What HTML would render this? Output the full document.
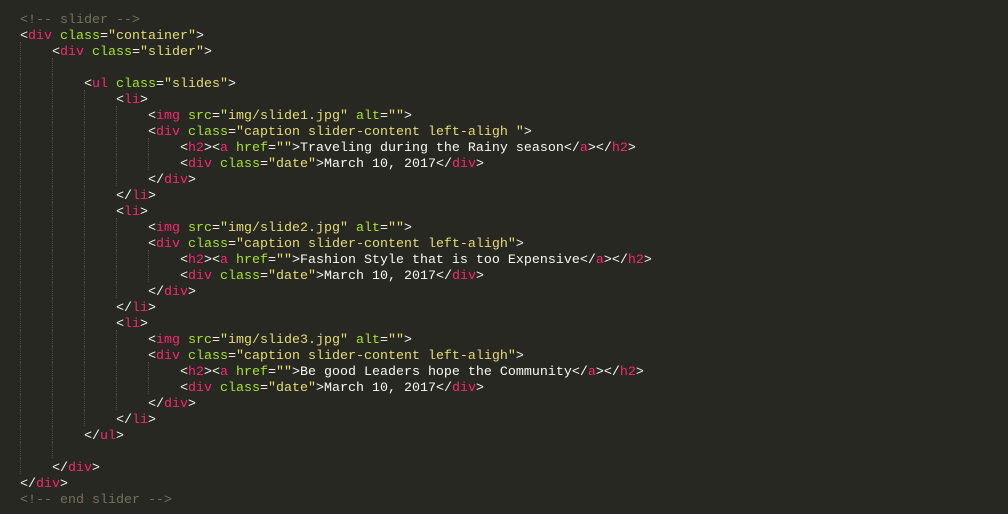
<!DOCTYPE html>
<html><head><meta charset="utf-8"><style>
html,body{margin:0;padding:0;background:#272822;width:1008px;height:514px;overflow:hidden}
#c{position:absolute;left:20px;top:13px;font-family:"Liberation Mono",monospace;font-size:13.333px;color:#f8f8f2}
.l{height:16px;line-height:16px;white-space:pre;position:relative}
.g{position:absolute;top:-3px;height:16px;border-left:1px dotted #4a4b44}
.t{color:#f92672}.a{color:#a6e22e}.s{color:#e6db74}.m{color:#75715e}
</style></head><body><div id="c">
<div class="l"><span class="m">&lt;!-- slider --&gt;</span></div>
<div class="l">&lt;<span class="t">div</span> <span class="a">class</span>=<span class="s">"container"</span>&gt;</div>
<div class="l"><i class="g" style="left:0"></i>    &lt;<span class="t">div</span> <span class="a">class</span>=<span class="s">"slider"</span>&gt;</div>
<div class="l"><i class="g" style="left:0"></i><i class="g" style="left:32px"></i> </div>
<div class="l"><i class="g" style="left:0"></i><i class="g" style="left:32px"></i>        &lt;<span class="t">ul</span> <span class="a">class</span>=<span class="s">"slides"</span>&gt;</div>
<div class="l"><i class="g" style="left:0"></i><i class="g" style="left:32px"></i><i class="g" style="left:64px"></i>            &lt;<span class="t">li</span>&gt;</div>
<div class="l"><i class="g" style="left:0"></i><i class="g" style="left:32px"></i><i class="g" style="left:64px"></i><i class="g" style="left:96px"></i>                &lt;<span class="t">img</span> <span class="a">src</span>=<span class="s">"img/slide1.jpg"</span> <span class="a">alt</span>=<span class="s">""</span>&gt;</div>
<div class="l"><i class="g" style="left:0"></i><i class="g" style="left:32px"></i><i class="g" style="left:64px"></i><i class="g" style="left:96px"></i>                &lt;<span class="t">div</span> <span class="a">class</span>=<span class="s">"caption slider-content left-aligh "</span>&gt;</div>
<div class="l"><i class="g" style="left:0"></i><i class="g" style="left:32px"></i><i class="g" style="left:64px"></i><i class="g" style="left:96px"></i><i class="g" style="left:128px"></i>                    &lt;<span class="t">h2</span>&gt;&lt;<span class="t">a</span> <span class="a">href</span>=<span class="s">""</span>&gt;Traveling during the Rainy season&lt;/<span class="t">a</span>&gt;&lt;/<span class="t">h2</span>&gt;</div>
<div class="l"><i class="g" style="left:0"></i><i class="g" style="left:32px"></i><i class="g" style="left:64px"></i><i class="g" style="left:96px"></i><i class="g" style="left:128px"></i>                    &lt;<span class="t">div</span> <span class="a">class</span>=<span class="s">"date"</span>&gt;March 10, 2017&lt;/<span class="t">div</span>&gt;</div>
<div class="l"><i class="g" style="left:0"></i><i class="g" style="left:32px"></i><i class="g" style="left:64px"></i><i class="g" style="left:96px"></i>                &lt;/<span class="t">div</span>&gt;</div>
<div class="l"><i class="g" style="left:0"></i><i class="g" style="left:32px"></i><i class="g" style="left:64px"></i>            &lt;/<span class="t">li</span>&gt;</div>
<div class="l"><i class="g" style="left:0"></i><i class="g" style="left:32px"></i><i class="g" style="left:64px"></i>            &lt;<span class="t">li</span>&gt;</div>
<div class="l"><i class="g" style="left:0"></i><i class="g" style="left:32px"></i><i class="g" style="left:64px"></i><i class="g" style="left:96px"></i>                &lt;<span class="t">img</span> <span class="a">src</span>=<span class="s">"img/slide2.jpg"</span> <span class="a">alt</span>=<span class="s">""</span>&gt;</div>
<div class="l"><i class="g" style="left:0"></i><i class="g" style="left:32px"></i><i class="g" style="left:64px"></i><i class="g" style="left:96px"></i>                &lt;<span class="t">div</span> <span class="a">class</span>=<span class="s">"caption slider-content left-aligh"</span>&gt;</div>
<div class="l"><i class="g" style="left:0"></i><i class="g" style="left:32px"></i><i class="g" style="left:64px"></i><i class="g" style="left:96px"></i><i class="g" style="left:128px"></i>                    &lt;<span class="t">h2</span>&gt;&lt;<span class="t">a</span> <span class="a">href</span>=<span class="s">""</span>&gt;Fashion Style that is too Expensive&lt;/<span class="t">a</span>&gt;&lt;/<span class="t">h2</span>&gt;</div>
<div class="l"><i class="g" style="left:0"></i><i class="g" style="left:32px"></i><i class="g" style="left:64px"></i><i class="g" style="left:96px"></i><i class="g" style="left:128px"></i>                    &lt;<span class="t">div</span> <span class="a">class</span>=<span class="s">"date"</span>&gt;March 10, 2017&lt;/<span class="t">div</span>&gt;</div>
<div class="l"><i class="g" style="left:0"></i><i class="g" style="left:32px"></i><i class="g" style="left:64px"></i><i class="g" style="left:96px"></i>                &lt;/<span class="t">div</span>&gt;</div>
<div class="l"><i class="g" style="left:0"></i><i class="g" style="left:32px"></i><i class="g" style="left:64px"></i>            &lt;/<span class="t">li</span>&gt;</div>
<div class="l"><i class="g" style="left:0"></i><i class="g" style="left:32px"></i><i class="g" style="left:64px"></i>            &lt;<span class="t">li</span>&gt;</div>
<div class="l"><i class="g" style="left:0"></i><i class="g" style="left:32px"></i><i class="g" style="left:64px"></i><i class="g" style="left:96px"></i>                &lt;<span class="t">img</span> <span class="a">src</span>=<span class="s">"img/slide3.jpg"</span> <span class="a">alt</span>=<span class="s">""</span>&gt;</div>
<div class="l"><i class="g" style="left:0"></i><i class="g" style="left:32px"></i><i class="g" style="left:64px"></i><i class="g" style="left:96px"></i>                &lt;<span class="t">div</span> <span class="a">class</span>=<span class="s">"caption slider-content left-aligh"</span>&gt;</div>
<div class="l"><i class="g" style="left:0"></i><i class="g" style="left:32px"></i><i class="g" style="left:64px"></i><i class="g" style="left:96px"></i><i class="g" style="left:128px"></i>                    &lt;<span class="t">h2</span>&gt;&lt;<span class="t">a</span> <span class="a">href</span>=<span class="s">""</span>&gt;Be good Leaders hope the Community&lt;/<span class="t">a</span>&gt;&lt;/<span class="t">h2</span>&gt;</div>
<div class="l"><i class="g" style="left:0"></i><i class="g" style="left:32px"></i><i class="g" style="left:64px"></i><i class="g" style="left:96px"></i><i class="g" style="left:128px"></i>                    &lt;<span class="t">div</span> <span class="a">class</span>=<span class="s">"date"</span>&gt;March 10, 2017&lt;/<span class="t">div</span>&gt;</div>
<div class="l"><i class="g" style="left:0"></i><i class="g" style="left:32px"></i><i class="g" style="left:64px"></i><i class="g" style="left:96px"></i>                &lt;/<span class="t">div</span>&gt;</div>
<div class="l"><i class="g" style="left:0"></i><i class="g" style="left:32px"></i><i class="g" style="left:64px"></i>            &lt;/<span class="t">li</span>&gt;</div>
<div class="l"><i class="g" style="left:0"></i><i class="g" style="left:32px"></i>        &lt;/<span class="t">ul</span>&gt;</div>
<div class="l"><i class="g" style="left:0"></i><i class="g" style="left:32px"></i> </div>
<div class="l"><i class="g" style="left:0"></i>    &lt;/<span class="t">div</span>&gt;</div>
<div class="l">&lt;/<span class="t">div</span>&gt;</div>
<div class="l"><span class="m">&lt;!-- end slider --&gt;</span></div>
</div></body></html>
